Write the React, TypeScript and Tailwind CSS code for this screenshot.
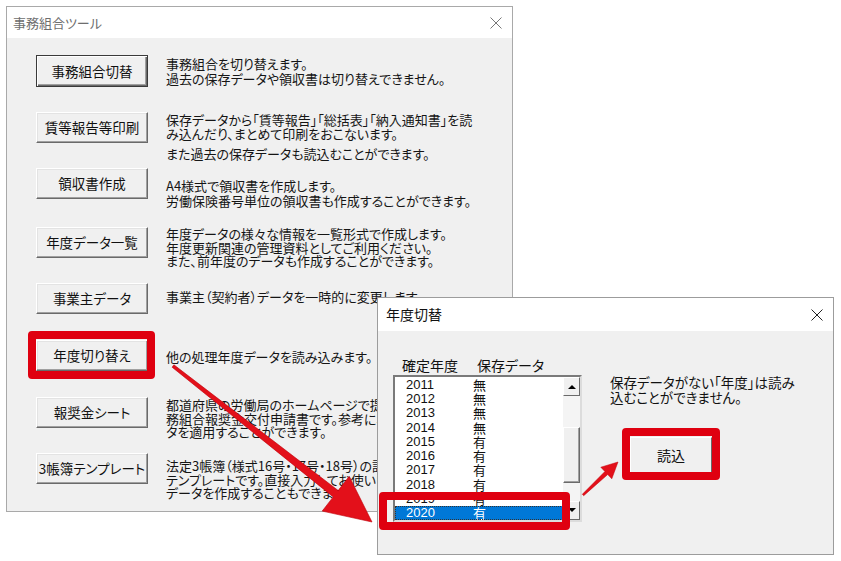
import React from "react";

type Row = {
  label: string;
  def?: boolean;
  h: string;
  pt: string;
  lead: string;
  lines: string[];
  extra?: string;
  clip?: string;
};

const rows: Row[] = [
  {
    label: "事務組合切替",
    def: true,
    h: "h-[57px]",
    pt: "pt-[1px]",
    lead: "leading-[15px]",
    lines: ["事務組合を切り替えます。", "過去の保存データや領収書は切り替えできません。"],
  },
  {
    label: "賃等報告等印刷",
    h: "h-[56px]",
    pt: "pt-[1px]",
    lead: "leading-[14px]",
    lines: ["保存データから「賃等報告」「総括表」「納入通知書」を読", "み込んだり、まとめて印刷をおこないます。"],
    extra: "また過去の保存データも読込むことができます。",
  },
  {
    label: "領収書作成",
    h: "h-[59px]",
    pt: "pt-[10px]",
    lead: "leading-[15px]",
    lines: ["A4様式で領収書を作成します。", "労働保険番号単位の領収書も作成することができます。"],
  },
  {
    label: "年度データ一覧",
    h: "h-[56px]",
    pt: "pt-[0px]",
    lead: "leading-[13.5px]",
    lines: [
      "年度データの様々な情報を一覧形式で作成します。",
      "年度更新関連の管理資料としてご利用ください。",
      "また、前年度のデータも作成することができます。",
    ],
  },
  {
    label: "事業主データ",
    h: "h-[57px]",
    pt: "pt-[7px]",
    lead: "leading-[14px]",
    lines: ["事業主（契約者）データを一時的に変更します。"],
  },
  {
    label: "年度切り替え",
    h: "h-[57px]",
    pt: "pt-[10px]",
    lead: "leading-[14px]",
    lines: ["他の処理年度データを読み込みます。"],
  },
  {
    label: "報奨金シート",
    h: "h-[56px]",
    pt: "pt-[1px]",
    lead: "leading-[13.5px]",
    clip: "w-[211px] overflow-hidden",
    lines: [
      "都道府県の労働局のホームページで提供されている労働保険事",
      "務組合報奨金交付申請書です。参考に年度の保存デー",
      "タを適用することができます。",
    ],
  },
  {
    label: "3帳簿テンプレート",
    h: "h-[52px]",
    pt: "pt-[6px]",
    lead: "leading-[13.5px]",
    clip: "w-[211px] overflow-hidden",
    lines: [
      "法定3帳簿（様式16号・17号・18号）の記入用Excel",
      "テンプレートです。直接入力してお使いいただくか、",
      "データを作成することもできます。",
    ],
  },
];

const years: [string, string][] = [
  ["2011", "無"],
  ["2012", "無"],
  ["2013", "無"],
  ["2014", "無"],
  ["2015", "有"],
  ["2016", "有"],
  ["2017", "有"],
  ["2018", "有"],
  ["2019", "有"],
  ["2020", "有"],
];

function CloseX({ color }: { color: string }) {
  return (
    <svg width="12" height="12" viewBox="0 0 12 12">
      <path d="M0.5 0.5 L11.5 11.5 M11.5 0.5 L0.5 11.5" stroke={color} strokeWidth="1" fill="none" />
    </svg>
  );
}

function MainButton({ label, def }: { label: string; def?: boolean }) {
  if (def) {
    return (
      <div className="w-[112px] h-[32px] shrink-0 flex items-center justify-center border border-[#3a3a3a] bg-[#f0f0f0] shadow-[inset_1px_1px_0_#ffffff,inset_-1px_-1px_0_#6a6a6a,inset_-2px_-2px_0_#a0a0a0] text-[13.5px] text-[#111] [font-feature-settings:'palt']">
        {label}
      </div>
    );
  }
  return (
    <div className="w-[112px] h-[31px] shrink-0 flex items-center justify-center border border-t-[#ffffff] border-l-[#ffffff] border-r-[#6a6a6a] border-b-[#6a6a6a] bg-[#f0f0f0] shadow-[inset_-1px_-1px_0_#a0a0a0,inset_1px_1px_0_#e3e3e3] text-[13.5px] text-[#111] [font-feature-settings:'palt']">
      {label}
    </div>
  );
}

export default function App() {
  return (
    <div className="relative w-[841px] h-[561px] bg-white overflow-hidden font-['Noto_Sans_CJK_JP',sans-serif] text-black">
      {/* Main dialog */}
      <div className="absolute left-[6px] top-[6px] w-[507px] h-[506px] border border-[#a9a9a9] bg-[#f0f0f0] flex flex-col overflow-hidden">
        <div className="h-[31px] shrink-0 bg-white flex items-center justify-between pl-[6px] pr-[10px]">
          <span className="text-[13px] text-[#6e6e6e] [font-feature-settings:'palt']">事務組合ツール</span>
          <CloseX color="#777777" />
        </div>
        <div className="flex flex-col pl-[29px] pt-[17px]">
          {rows.map((r) => (
            <div key={r.label} className={`flex items-start shrink-0 ${r.h}`}>
              <MainButton label={r.label} def={r.def} />
              <div className={`ml-[18px] flex flex-col whitespace-nowrap text-[13px] text-[#151515] [font-feature-settings:'palt'] ${r.pt} ${r.lead} ${r.clip ?? ""}`}>
                {r.lines.map((l) => (
                  <div key={l}>{l}</div>
                ))}
                {r.extra && <div className="mt-[6px]">{r.extra}</div>}
              </div>
            </div>
          ))}
        </div>
      </div>

      {/* Year switch dialog */}
      <div className="absolute left-[377px] top-[297px] w-[457px] h-[258px] border border-[#9c9c9c] bg-[#f0f0f0] flex flex-col overflow-hidden">
        <div className="h-[33px] shrink-0 bg-white flex items-center justify-between pl-[8px] pr-[10px]">
          <span className="text-[14px] text-[#111] [font-feature-settings:'palt']">年度切替</span>
          <CloseX color="#222222" />
        </div>
        <div className="flex items-start">
          <div className="flex flex-col pl-[15px] pt-[25px]">
            <div className="h-[19px] flex items-center pl-[9px] text-[14px] text-[#111] [font-feature-settings:'palt']">
              <span className="w-[75px]">確定年度</span>
              <span>保存データ</span>
            </div>
            <div className="w-[189px] h-[147px] flex border-2 border-t-[#7a7a7a] border-l-[#7a7a7a] border-r-[#dcdcdc] border-b-[#dcdcdc] bg-white">
              <div className="flex-1 flex flex-col">
                {years.map(([y, v]) => {
                  const sel = y === "2020";
                  return (
                    <div
                      key={y}
                      className={
                        sel
                          ? "h-[14.3px] flex items-center bg-[#0078d7] text-white outline outline-1 outline-dotted outline-[#333] -outline-offset-1"
                          : "h-[14.3px] flex items-center text-[#111]"
                      }
                    >
                      <span className="w-[78px] pl-[11px] text-[13px] font-['Liberation_Sans',sans-serif] leading-none">
                        {y}
                      </span>
                      <span className="text-[13px] leading-none">{v}</span>
                    </div>
                  );
                })}
              </div>
              <div className="w-[17px] flex flex-col bg-[#f4f4f4]">
                <div className="h-[19px] flex items-center justify-center bg-[#f0f0f0] border border-t-white border-l-white border-r-[#6a6a6a] border-b-[#6a6a6a]">
                  <svg width="8" height="5" viewBox="0 0 8 5">
                    <path d="M0 5 L4 1 L8 5 Z" fill="#000" />
                  </svg>
                </div>
                <div className="h-[31px]" />
                <div className="h-[56px] bg-[#f0f0f0] border border-t-white border-l-white border-r-[#6a6a6a] border-b-[#6a6a6a] shadow-[inset_-1px_-1px_0_#a0a0a0]" />
                <div className="flex-1" />
                <div className="h-[19px] flex items-center justify-center bg-[#f0f0f0] border border-t-white border-l-white border-r-[#6a6a6a] border-b-[#6a6a6a]">
                  <svg width="8" height="5" viewBox="0 0 8 5">
                    <path d="M0 0 L4 4 L8 0 Z" fill="#000" />
                  </svg>
                </div>
              </div>
            </div>
          </div>
          <div className="flex flex-col ml-[28px] pt-[44px]">
            <div className="text-[13.5px] leading-[15px] text-[#111] whitespace-nowrap [font-feature-settings:'palt']">
              <div>保存データがない「年度」は読み</div>
              <div>込むことができません。</div>
            </div>
            <div className="ml-[20px] mt-[32px] w-[82px] h-[36px] flex items-center justify-center bg-[#f0f0f0] border border-t-white border-l-white border-r-[#6a6a6a] border-b-[#6a6a6a] text-[14px] text-[#111]">
              読込
            </div>
          </div>
        </div>
      </div>

      {/* Red highlight frames */}
      <div className="absolute left-[28px] top-[331px] w-[127px] h-[48px] border-[8px] border-[#df0010] rounded-[4px]" />
      <div className="absolute left-[379px] top-[492px] w-[191px] h-[38px] border-[8px] border-[#df0010] rounded-[4px]" />
      <div className="absolute left-[622px] top-[428px] w-[98px] h-[52px] border-[8px] border-[#df0010] rounded-[4px]" />

      {/* Arrows */}
      <svg className="absolute left-0 top-0 pointer-events-none" width="841" height="561" viewBox="0 0 841 561">
        <polygon
          points="172.1,367.2 333.2,496.9 322.2,511.1 372,522 349.2,476.3 338.2,490.5 173.9,364.8"
          fill="#e3101a"
          stroke="#c0000a"
          strokeWidth="0.6"
          strokeLinejoin="round"
        />
        <polygon
          points="583.7,495.7 607.7,474.5 611.8,478.8 618,462 600.8,467.2 604.9,471.5 582.3,494.3"
          fill="#e3101a"
          stroke="#c0000a"
          strokeWidth="0.5"
          strokeLinejoin="round"
        />
      </svg>
    </div>
  );
}
